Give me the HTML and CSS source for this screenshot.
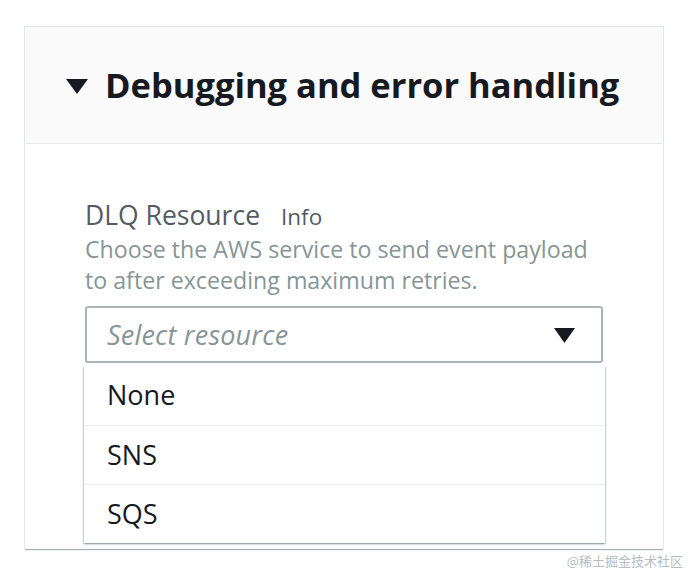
FILE: index.html
```html
<!DOCTYPE html>
<html lang="en">
<head>
<meta charset="utf-8">
<title>Debugging and error handling</title>
<link rel="stylesheet" href="styles.css">
</head>
<body>
<section class="card">
  <header class="card-header">
    <svg class="caret" width="22" height="15" viewBox="0 0 22 15"><polygon points="0,0 22,0 11,15" fill="#16191f"/></svg>
    <h2 class="title">Debugging and error handling</h2>
  </header>
  <div class="card-body">
    <div class="label-row">
      <span class="label">DLQ Resource</span>
      <span class="info">Info</span>
    </div>
    <p class="desc">Choose the AWS service to send event payload to after exceeding maximum retries.</p>
    <div class="select">
      <span class="placeholder">Select resource</span>
      <svg class="sel-caret" width="21" height="15" viewBox="0 0 21 15"><polygon points="0,0 21,0 10.5,15" fill="#16191f"/></svg>
    </div>
    <ul class="menu">
      <li class="option">None</li>
      <li class="option">SNS</li>
      <li class="option">SQS</li>
    </ul>
  </div>
</section>
<div class="watermark">@稀土掘金技术社区</div>
</body>
</html>
```
FILE: styles.css
```css
* { box-sizing: border-box; }
html, body { margin: 0; padding: 0; background: #fff; }
body {
  width: 689px;
  height: 576px;
  position: relative;
  overflow: hidden;
  font-family: "Open Sans", "Noto Sans", "Noto Sans CJK SC", sans-serif;
  padding: 26px 0 0 24px;
}
.card {
  width: 640px;
  border: 1px solid #e4e7e7;
  border-bottom: none;
  box-shadow: 0 2px 1px -1px rgba(0,28,36,0.35);
  padding-bottom: 6px;
}
.card-header {
  height: 117px;
  background: #fafafa;
  border-bottom: 1px solid #eaeded;
  display: flex;
  align-items: center;
  padding-left: 41px;
  gap: 17px;
}
.caret { flex: none; margin-top: 2px; }
.title {
  margin: 0;
  font-size: 34.5px;
  font-weight: 700;
  color: #16191f;
  letter-spacing: 0;
  line-height: 40px;
}
.card-body {
  padding: 54px 0 0 60px;
}
.label-row {
  display: flex;
  align-items: baseline;
  gap: 21px;
  height: 34px;
  line-height: 34px;
}
.label {
  font-size: 26.5px;
  color: #545b64;
}
.info {
  font-size: 22.5px;
  color: #545b64;
}
.desc {
  margin: 2px 0 0;
  width: 514px;
  font-size: 23.2px;
  line-height: 31px;
  color: #879596;
}
.select {
  margin-top: 10px;
  width: 518px;
  height: 57px;
  border: 2px solid #aab7b8;
  border-radius: 3px;
  display: flex;
  align-items: center;
  justify-content: space-between;
  padding: 0 26px 0 20px;
}
.sel-caret { margin-top: 2px; }
.placeholder {
  font-size: 27px;
  font-style: italic;
  color: #879596;
  letter-spacing: 0.2px;
}
.menu {
  list-style: none;
  margin: 3px 0 0 -1px;
  padding: 0;
  width: 521px;
  background: #fff;
  box-shadow: 0 1px 2px 0 rgba(0,28,36,0.35), 1px 1px 1px 0 rgba(0,28,36,0.1), -1px 1px 1px 0 rgba(0,28,36,0.1);
}
.option {
  height: 59px;
  display: flex;
  align-items: center;
  padding-left: 23px;
  padding-bottom: 2px;
  font-size: 27px;
  color: #16191f;
  border-top: 1px solid #eaeded;
}
.option:first-child { border-top: none; }
.watermark {
  position: absolute;
  right: 6px;
  bottom: 6px;
  font-size: 13px;
  color: #b8bcc0;
  font-family: "Noto Sans CJK SC", sans-serif;
}
```
